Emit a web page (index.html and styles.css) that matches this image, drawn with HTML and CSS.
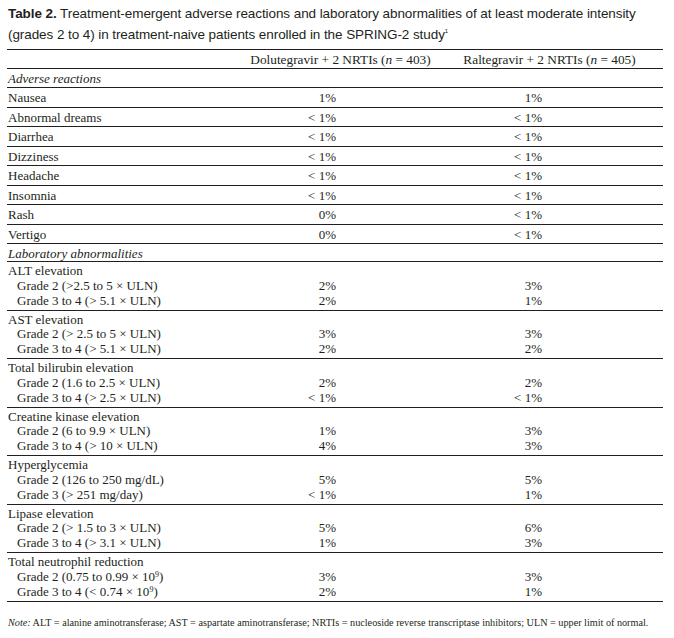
FILE: index.html
```html
<!DOCTYPE html>
<html lang="en">
<head>
<meta charset="utf-8">
<title>Table 2</title>
<link rel="stylesheet" href="styles.css">
</head>
<body>
<div class="page">
  <p class="title"><b>Table 2.</b> Treatment-emergent adverse reactions and laboratory abnormalities of at least moderate intensity<br>(grades 2 to 4) in treatment-naive patients enrolled in the SPRING-2 study<sup>1</sup></p>
  <table class="data">
    <colgroup><col class="c1"><col class="c2"><col class="c3"></colgroup>
    <thead>
      <tr class="head"><th></th><th>Dolutegravir + 2 NRTIs (<i>n</i> = 403)</th><th>Raltegravir + 2 NRTIs (<i>n</i> = 405)</th></tr>
    </thead>
    <tbody>
      <tr class="section"><td colspan="3">Adverse reactions</td></tr>
      <tr class="single"><td>Nausea</td><td>1%</td><td>1%</td></tr>
      <tr class="single"><td>Abnormal dreams</td><td>&lt; 1%</td><td>&lt; 1%</td></tr>
      <tr class="single"><td>Diarrhea</td><td>&lt; 1%</td><td>&lt; 1%</td></tr>
      <tr class="single"><td>Dizziness</td><td>&lt; 1%</td><td>&lt; 1%</td></tr>
      <tr class="single"><td>Headache</td><td>&lt; 1%</td><td>&lt; 1%</td></tr>
      <tr class="single"><td>Insomnia</td><td>&lt; 1%</td><td>&lt; 1%</td></tr>
      <tr class="single"><td>Rash</td><td>0%</td><td>&lt; 1%</td></tr>
      <tr class="single"><td>Vertigo</td><td>0%</td><td>&lt; 1%</td></tr>
      <tr class="section lab"><td colspan="3">Laboratory abnormalities</td></tr>

      <tr class="g-head"><td>ALT elevation</td><td></td><td></td></tr>
      <tr class="g-mid"><td>Grade 2 (&gt;2.5 to 5 × ULN)</td><td>2%</td><td>3%</td></tr>
      <tr class="g-end"><td>Grade 3 to 4 (&gt; 5.1 × ULN)</td><td>2%</td><td>1%</td></tr>

      <tr class="g-head"><td>AST elevation</td><td></td><td></td></tr>
      <tr class="g-mid"><td>Grade 2 (&gt; 2.5 to 5 × ULN)</td><td>3%</td><td>3%</td></tr>
      <tr class="g-end"><td>Grade 3 to 4 (&gt; 5.1 × ULN)</td><td>2%</td><td>2%</td></tr>

      <tr class="g-head"><td>Total bilirubin elevation</td><td></td><td></td></tr>
      <tr class="g-mid"><td>Grade 2 (1.6 to 2.5 × ULN)</td><td>2%</td><td>2%</td></tr>
      <tr class="g-end"><td>Grade 3 to 4 (&gt; 2.5 × ULN)</td><td>&lt; 1%</td><td>&lt; 1%</td></tr>

      <tr class="g-head"><td>Creatine kinase elevation</td><td></td><td></td></tr>
      <tr class="g-mid"><td>Grade 2 (6 to 9.9 × ULN)</td><td>1%</td><td>3%</td></tr>
      <tr class="g-end"><td>Grade 3 to 4 (&gt; 10 × ULN)</td><td>4%</td><td>3%</td></tr>

      <tr class="g-head"><td>Hyperglycemia</td><td></td><td></td></tr>
      <tr class="g-mid"><td>Grade 2 (126 to 250 mg/dL)</td><td>5%</td><td>5%</td></tr>
      <tr class="g-end"><td>Grade 3 (&gt; 251 mg/day)</td><td>&lt; 1%</td><td>1%</td></tr>

      <tr class="g-head"><td>Lipase elevation</td><td></td><td></td></tr>
      <tr class="g-mid"><td>Grade 2 (&gt; 1.5 to 3 × ULN)</td><td>5%</td><td>6%</td></tr>
      <tr class="g-end"><td>Grade 3 to 4 (&gt; 3.1 × ULN)</td><td>1%</td><td>3%</td></tr>

      <tr class="g-head"><td>Total neutrophil reduction</td><td></td><td></td></tr>
      <tr class="g-mid"><td>Grade 2 (0.75 to 0.99 × 10<sup>9</sup>)</td><td>3%</td><td>3%</td></tr>
      <tr class="g-end"><td>Grade 3 to 4 (&lt; 0.74 × 10<sup>9</sup>)</td><td>2%</td><td>1%</td></tr>
    </tbody>
  </table>
  <p class="note"><i>Note:</i> ALT = alanine aminotransferase; AST = aspartate aminotransferase; NRTIs = nucleoside reverse transcriptase inhibitors; ULN = upper limit of normal.</p>
</div>
</body>
</html>
```
FILE: styles.css
```css
html, body {
  margin: 0;
  background: #ffffff;
}

.page {
  width: 656px;
  padding: 4px 0 0 7px;
  color: #231f20;
}

.title {
  margin: 0 0 4px 1px;
  font-family: "Liberation Sans", Arial, sans-serif;
  font-size: 13.5px;
  letter-spacing: -0.08px;
  line-height: 20.5px;
  white-space: nowrap;
  color: #231f20;
}

.title b {
  font-weight: bold;
}

.title sup {
  font-size: 6px;
  vertical-align: 6px;
  line-height: 0;
}

.data {
  width: 656px;
  table-layout: fixed;
  border-collapse: separate;
  border-spacing: 0;
  border-top: 1.5px solid #231f20;
  font-family: "Liberation Serif", "Times New Roman", serif;
  font-size: 13px;
  color: #231f20;
}

.c1 { width: 238px; }
.c2 { width: 191px; }
.c3 { width: 227px; }

.data th,
.data td {
  padding: 0;
  vertical-align: middle;
  white-space: nowrap;
}

.data td:first-child {
  padding-left: 1px;
  text-align: left;
}

.data td:nth-child(2) {
  text-align: right;
  padding-right: 100px;
}

.data td:nth-child(3) {
  text-align: right;
  padding-right: 121px;
}

.head th {
  font-weight: normal;
  font-size: 13.3px;
  line-height: 15px;
  padding: 2px 0 0.5px;
  text-align: center;
  border-bottom: 1.5px solid #231f20;
}

.section td {
  font-style: italic;
  line-height: 15px;
  padding-top: 2px;
  padding-bottom: 1.5px;
  border-bottom: 1.5px solid #231f20;
}

.section.lab td {
  padding-top: 1.6px;
  padding-bottom: 0.5px;
}

.single td {
  line-height: 15px;
  padding-top: 2px;
  padding-bottom: 1.5px;
  border-bottom: 1.5px solid #231f20;
}

.g-head td,
.g-mid td,
.g-end td {
  line-height: 14.7px;
}

.g-head td {
  padding-top: 2px;
}

.g-end td {
  padding-bottom: 1.4px;
  border-bottom: 1.5px solid #231f20;
}

.g-mid td:first-child,
.g-end td:first-child {
  padding-left: 10px;
}

.data sup {
  font-size: 8px;
  vertical-align: 4px;
  line-height: 0;
}

.note {
  margin: 15px 0 0 1px;
  font-family: "Liberation Serif", "Times New Roman", serif;
  font-size: 10.2px;
  line-height: 12px;
  white-space: nowrap;
  color: #231f20;
}
```
